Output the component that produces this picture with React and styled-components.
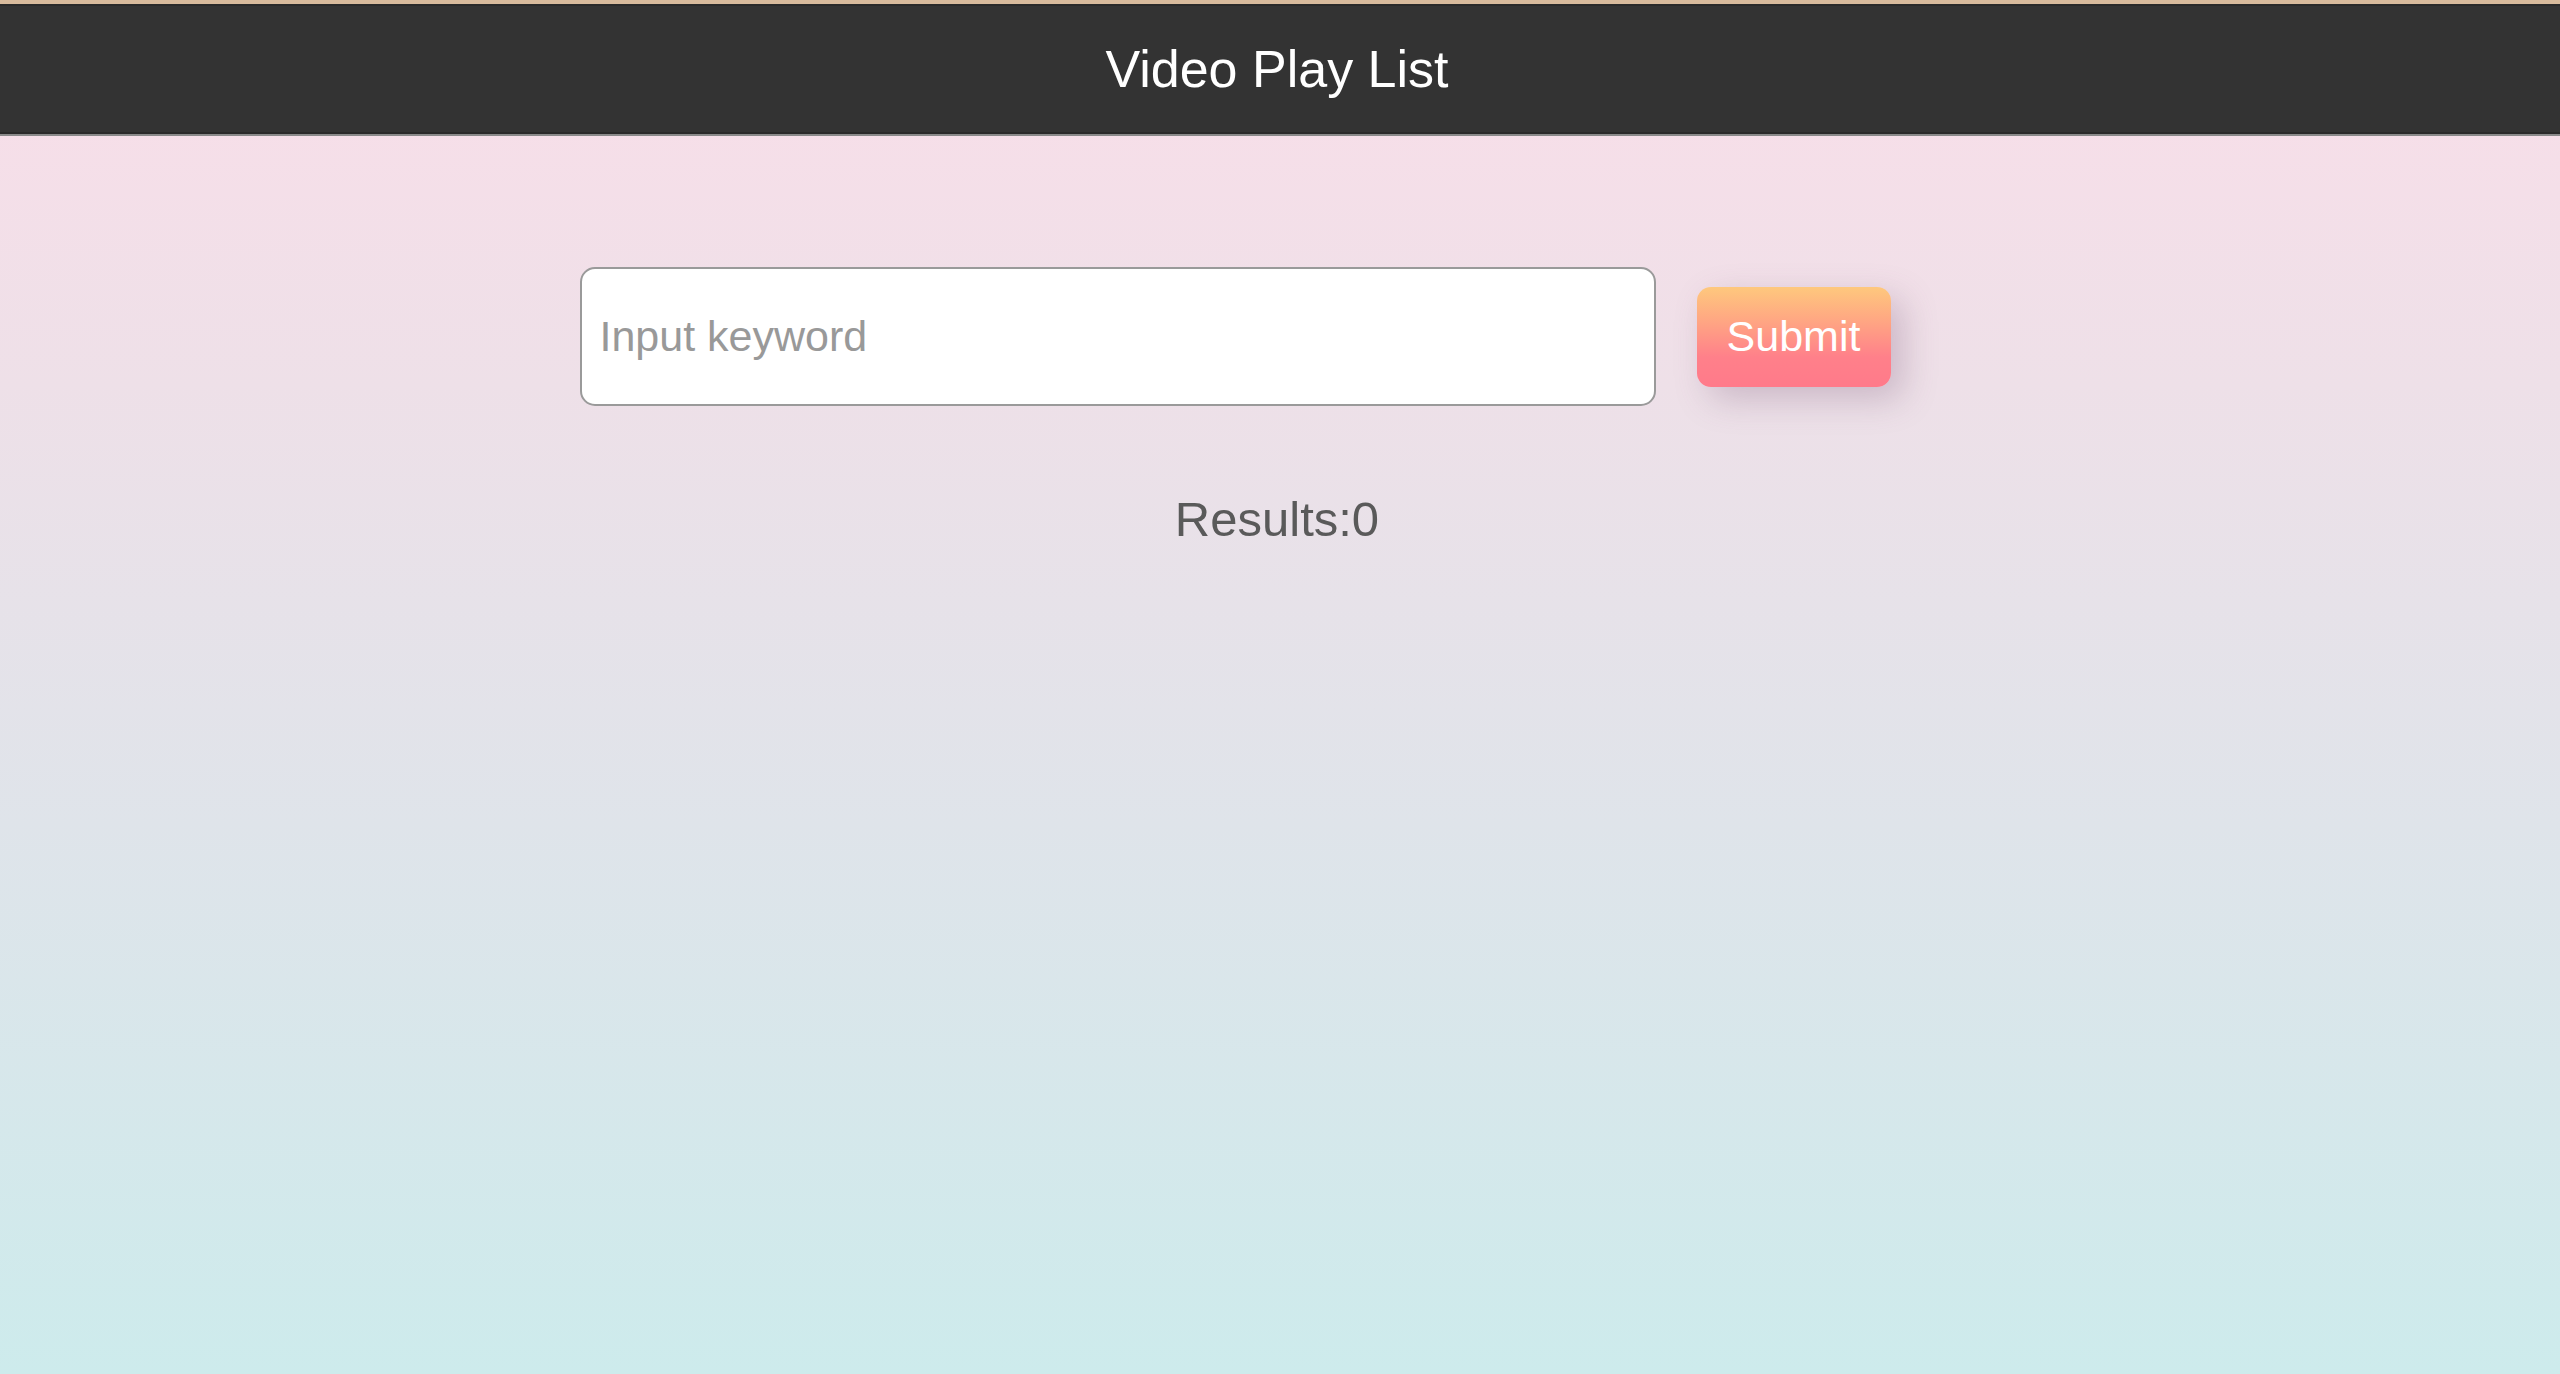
import React, { useState } from "react";
import styled, { createGlobalStyle } from "styled-components";

const GlobalStyle = createGlobalStyle`
  html, body {
    margin: 0;
    padding: 0;
  }
  body {
    font-family: "Liberation Sans", Arial, sans-serif;
  }
`;

const Page = styled.div`
  min-height: 1374px;
  background: linear-gradient(180deg, #fadee9 0%, #eee0e8 28%, #dfe4ea 60%, #cdebec 100%);
  display: flex;
  flex-direction: column;
`;

const Header = styled.header`
  box-sizing: border-box;
  height: 134px;
  background: #333333;
  border-top: 4px solid #d8bb9d;
  box-shadow: inset 0 2px 0 #2a2a2a, inset 0 -2px 0 #2a2a2a, 0 2px 0 #8a8a8a;
  display: flex;
  align-items: center;
  justify-content: center;
  padding-right: 6px;
`;

const Title = styled.h1`
  margin: 0;
  color: #ffffff;
  font-size: 52px;
  font-weight: 400;
  line-height: 1;
`;

const Main = styled.main`
  display: flex;
  flex-direction: column;
  align-items: center;
  padding-top: 133px;
`;

const Form = styled.form`
  display: flex;
  align-items: center;
  gap: 41px;
  padding-right: 90px;
`;

const Input = styled.input`
  box-sizing: border-box;
  width: 1076px;
  height: 139px;
  border: 2px solid #9a9a9a;
  border-radius: 15px;
  background: #ffffff;
  padding: 0 18px;
  font-family: "Liberation Sans", Arial, sans-serif;
  font-size: 43px;
  color: #333;
  outline: none;
  &::placeholder {
    color: #999999;
  }
`;

const SubmitButton = styled.button`
  box-sizing: border-box;
  width: 194px;
  height: 100px;
  border: none;
  border-radius: 14px;
  background: linear-gradient(180deg, #fec87d 0%, #ffa583 35%, #ff808a 70%, #ff7a8a 100%);
  color: #ffffff;
  font-family: "Liberation Sans", Arial, sans-serif;
  font-size: 43px;
  box-shadow: 12px 12px 34px rgba(110, 80, 110, 0.28);
  cursor: pointer;
`;

const Results = styled.p`
  margin: 84px 6px 0 0;
  color: #5a5a5a;
  font-size: 49px;
  line-height: 1.2;
`;

export default function App() {
  const [keyword, setKeyword] = useState("");
  return (
    <>
      <GlobalStyle />
      <Page>
        <Header>
          <Title>Video Play List</Title>
        </Header>
        <Main>
          <Form onSubmit={(e) => e.preventDefault()}>
            <Input
              placeholder="Input keyword"
              value={keyword}
              onChange={(e) => setKeyword(e.target.value)}
            />
            <SubmitButton type="submit">Submit</SubmitButton>
          </Form>
          <Results>Results:0</Results>
        </Main>
      </Page>
    </>
  );
}
